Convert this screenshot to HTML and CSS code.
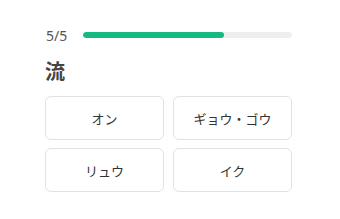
FILE: index.html
```html
<!DOCTYPE html>
<html lang="ja">
<head>
  <meta charset="UTF-8">
  <meta name="viewport" content="width=device-width, initial-scale=1.0">
  <title>漢字クイズ</title>
  <link rel="stylesheet" href="styles.css">
</head>
<body>
  <div class="quiz">
    <!-- 進捗 -->
    <div class="progress">
      <span class="progress-count">5/5</span>
      <div class="progress-track">
        <div class="progress-fill" style="width: 67.5%"></div>
      </div>
    </div>

    <!-- 問題 -->
    <h1 class="question">流</h1>

    <!-- 選択肢 -->
    <div class="choices">
      <button class="choice">オン</button>
      <button class="choice">ギョウ・ゴウ</button>
      <button class="choice">リュウ</button>
      <button class="choice">イク</button>
    </div>
  </div>
</body>
</html>
```

FILE: styles.css
```css
/* 基本 */
body {
  margin: 0;
  background-color: #fff;
  font-family: "Noto Sans CJK JP", "Noto Sans", sans-serif;
  color: #333;
}

.quiz {
  width: 247px;
  margin-left: 45px;
  padding-top: 26px;
}

/* 進捗バー */
.progress {
  display: flex;
  align-items: center;
  height: 18px;
}

.progress-count {
  width: 38px;
  padding-left: 1px;
  box-sizing: border-box;
  font-family: "Noto Sans", sans-serif;
  font-size: 14px;
  color: #555;
}

.progress-track {
  flex: 1;
  height: 6px;
  background-color: #eee;
  border-radius: 3px;
  overflow: hidden;
}

.progress-fill {
  height: 100%;
  background-color: #16b981;
  border-radius: 3px;
}

/* 問題 */
.question {
  font-size: 20px;
  font-weight: bold;
  color: #444;
  margin: 13px 0 0;
  line-height: 28px;
}

/* 選択肢 */
.choices {
  display: grid;
  grid-template-columns: 1fr 1fr;
  gap: 8px 9px;
  margin-top: 11px;
}

.choice {
  height: 44px;
  background-color: #fff;
  border: 1px solid #e2e2e2;
  border-radius: 6px;
  font-family: inherit;
  font-size: 13px;
  color: #333;
  cursor: pointer;
}
```
